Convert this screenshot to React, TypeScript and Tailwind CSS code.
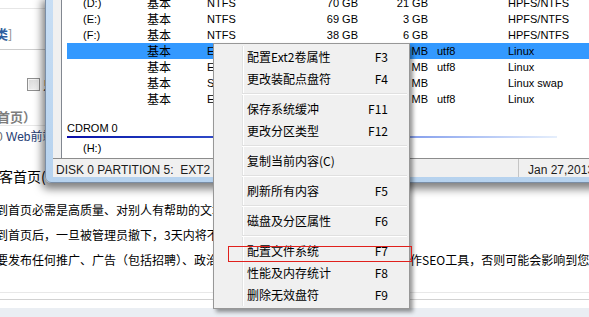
type Part = {
  drive: string;
  kind: string;
  fs: string;
  size: string;
  free: string;
  enc: string;
  type: string;
  selected?: boolean;
};

const parts: Part[] = [
  { drive: "(D:)", kind: "基本", fs: "NTFS", size: "70 GB", free: "21 GB", enc: "", type: "HPFS/NTFS" },
  { drive: "(E:)", kind: "基本", fs: "NTFS", size: "69 GB", free: "3 GB", enc: "", type: "HPFS/NTFS" },
  { drive: "(F:)", kind: "基本", fs: "NTFS", size: "38 GB", free: "6 GB", enc: "", type: "HPFS/NTFS" },
  { drive: "", kind: "基本", fs: "EXT2", size: "9 GB", free: "8560 MB", enc: "utf8", type: "Linux", selected: true },
  { drive: "", kind: "基本", fs: "EXT2", size: "20 GB", free: "1953 MB", enc: "utf8", type: "Linux" },
  { drive: "", kind: "基本", fs: "SWAP", size: "2 GB", free: "2047 MB", enc: "", type: "Linux swap" },
  { drive: "", kind: "基本", fs: "EXT2", size: "30 GB", free: "9216 MB", enc: "utf8", type: "Linux" },
];

// null = separator
const menu: ({ label: string; key: string } | null)[] = [
  { label: "配置Ext2卷属性", key: "F3" },
  { label: "更改装配点盘符", key: "F4" },
  null,
  { label: "保存系统缓冲", key: "F11" },
  { label: "更改分区类型", key: "F12" },
  null,
  { label: "复制当前内容(C)", key: "" },
  null,
  { label: "刷新所有内容", key: "F5" },
  null,
  { label: "磁盘及分区属性", key: "F6" },
  null,
  { label: "配置文件系统", key: "F7" },
  { label: "性能及内存统计", key: "F8" },
  { label: "删除无效盘符", key: "F9" },
];

const WebPage = () => (
  <div className="flex flex-col whitespace-nowrap">
    <div className="h-[9px] border-b border-[#e6e6e6]" />
    <div className="h-[41px] border-b border-[#cdcdcd] pt-[17px] text-[13px] leading-[16px]">
      <span className="-ml-[5px] font-bold text-[#2f5f9e]">类</span>
      <span className="text-[#8c8c8c]">]</span>
    </div>
    <div className="h-[76px] border-b border-[#e8e8e8]">
      <div className="ml-[27px] mt-[28px] flex items-center gap-[3px]">
        <span className="block h-[13px] w-[13px] border border-[#8f8f8f] bg-linear-to-br from-[#d6d6d6] to-[#f7f7f7] shadow-[inset_0_0_0_1px_#f4f4f4]" />
        <span className="text-[12px] leading-[13px]">只</span>
      </div>
      <div className="-ml-[3px] mt-[18px] text-[13px] font-bold leading-[16px] text-[#7d7d7d]">首页）</div>
    </div>
    <div className="mt-[2px] text-[12px] leading-[16px] text-[#1f3d74]">
      <span className="-ml-[4px] font-['Liberation_Sans',sans-serif] text-[#6a6a6a]">0 </span>
      <span className="font-['Liberation_Sans',sans-serif]">Web</span>
      <span>前端</span>
    </div>
    <div className="-ml-[1px] mt-[23px] text-[14px] leading-[16px]">客首页(</div>
    <div className="-ml-[4px] mt-[13px] text-[12px] leading-[25px]">
      <div>到首页必需是高质量、对别人有帮助的文章。</div>
      <div>到首页后，一旦被管理员撤下，3天内将不能再次发布到首页。</div>
      <div>要发布任何推广、广告（包括招聘）、政治、低俗等方面内容，不要把博客园当作SEO工具，否则可能会影响到您的账号。</div>
    </div>
    <div className="mt-[20px] h-[1px] bg-[#e8e8e8]" />
    <div className="mt-[6px] h-[1px] bg-[#d2d2d2]" />
    <div className="mt-[8px] h-[10px] bg-[#eaeef3]" />
  </div>
);

const PartitionWindow = () => (
  <div className="absolute left-[45px] top-[-6px] h-[189px] w-[580px] rounded-bl-[6px] border border-[#7a8ea6] bg-linear-to-b from-[#c8def4] to-[#b6d2ee] pb-[5px] pl-[7px] shadow-[-3px_6px_8px_rgba(0,0,0,0.5)]">
    <div className="flex h-full flex-col bg-[#f0f0f0]">
      <div className="ml-[8px] flex-1 overflow-hidden border-l border-[#828790] bg-white font-['Liberation_Sans','Noto_Sans_CJK_SC',sans-serif] text-[11px] whitespace-nowrap">
        {parts.map((p, i) => (
          <div
            key={i}
            className={`ml-[5px] flex h-[16px] items-center pl-[16px] ${p.selected ? "bg-[#3399ff]" : ""}`}
          >
            <span className="w-[64px]">{p.drive}</span>
            <span className="w-[60px] font-['Noto_Sans_CJK_SC',sans-serif] text-[12px]">{p.kind}</span>
            <span className="w-[100px]">{p.fs}</span>
            <span className="w-[51px] text-right">{p.size}</span>
            <span className="w-[70px] text-right">{p.free}</span>
            <span className="w-[80px] pl-[9px]">{p.enc}</span>
            <span>{p.type}</span>
          </div>
        ))}
        <div className="ml-[5px] mt-[13px] flex h-[16px] items-center">CDROM 0</div>
        <div className="ml-[5px] h-[2px] w-[490px] bg-linear-to-r from-[#0a0aa8] via-[#4d66dc] to-[#e6effc]" />
        <div className="mt-[2px] flex h-[16px] items-center pl-[21px]">(H:)</div>
      </div>
      <div className="flex h-[19px] items-center border-t border-[#8c8c8c] font-['Liberation_Sans',sans-serif] text-[12px] whitespace-pre text-[#1c1c1c]">
        <div className="flex h-full w-[466px] items-center border-r border-[#c5c5c5] pl-[3px] pt-[3px]">DISK 0 PARTITION 5:  EXT2 卷</div>
        <div className="pl-[9px] pt-[3px]">Jan 27,2013</div>
      </div>
    </div>
  </div>
);

const ContextMenu = () => (
  <div className="absolute left-[213px] top-[43px] w-[197px] border border-[#979797] bg-[#f0f0f0] p-[2px] shadow-[3px_3px_4px_rgba(0,0,0,0.4)]">
    <div className="absolute bottom-[2px] left-[28px] top-[2px] w-[2px] border-l border-[#e2e3e3] bg-white" />
    {menu.map((m, i) =>
      m ? (
        <div key={i} className="relative flex h-[22px] items-center justify-between pl-[31px] pr-[19px] text-[12px] leading-none">
          <span>{m.label}</span>
          <span>{m.key}</span>
        </div>
      ) : (
        <div key={i} className="relative flex h-[8px] items-center pl-[26px]">
          <div className="h-[2px] w-full border-t border-[#e0e0e0] bg-white" />
        </div>
      )
    )}
  </div>
);

export default function App() {
  return (
    <div className="relative h-[317px] w-[589px] overflow-hidden bg-white font-['Noto_Sans_CJK_SC',sans-serif] text-black">
      <WebPage />
      <PartitionWindow />
      <ContextMenu />
      {/* annotation box */}
      <div className="absolute left-[228px] top-[246px] h-[16px] w-[184px] border border-[#e0201c]" />
    </div>
  );
}
